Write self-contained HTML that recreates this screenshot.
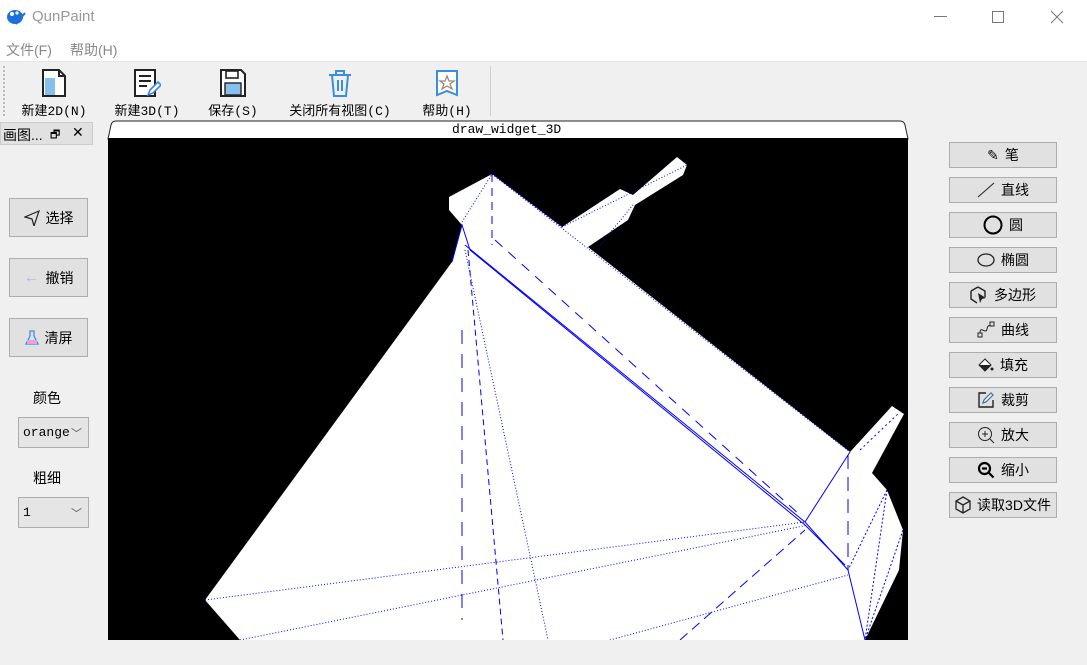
<!DOCTYPE html>
<html><head><meta charset="utf-8"><style>
*{margin:0;padding:0;box-sizing:border-box}
body{width:1087px;height:665px;background:#f0f0f0;font-family:"Liberation Sans","Noto Sans CJK SC",sans-serif;position:relative;overflow:hidden;font-size:13px;color:#000}
.abs{position:absolute}
.btn{position:absolute;background:#e1e1e1;border:1px solid #adadad;display:flex;align-items:center;justify-content:center;gap:6px;font-size:14px}
.tb{position:absolute;top:68px;text-align:center;font-size:13px;font-family:"Liberation Mono","Noto Sans CJK SC",monospace}
.tb svg{display:block;margin:0 auto 2px}
.combo{position:absolute;left:18px;width:71px;height:31px;background:#e5e5e5;border:1px solid #adadad;font-family:"Liberation Mono",monospace;font-size:13px;padding:7px 4px;overflow:hidden;white-space:nowrap}
.combo i{position:absolute;right:6px;top:7px;font-style:normal;color:#555;font-size:11px}
</style></head><body>
<div class="abs" style="left:0;top:0;width:1087px;height:62px;background:#fff"></div>
<svg class="abs" style="left:6px;top:8px" width="20" height="18"><ellipse cx="9" cy="9" rx="8" ry="7" fill="#1e6fd9"/><circle cx="6" cy="6" r="2" fill="#fff"/><circle cx="11" cy="5" r="1.6" fill="#fff"/><line x1="10" y1="16" x2="19" y2="5" stroke="#1e6fd9" stroke-width="2"/></svg>
<div class="abs" style="left:32px;top:8px;font-size:15px;color:#999">QunPaint</div>
<div class="abs" style="left:934px;top:16px;width:13px;height:1px;background:#777"></div>
<div class="abs" style="left:992px;top:11px;width:12px;height:12px;border:1px solid #777"></div>
<svg class="abs" style="left:1050px;top:10px" width="14" height="14"><path d="M1 1L13 13M13 1L1 13" stroke="#777"/></svg>
<div class="abs" style="left:6px;top:40px;font-size:14px;color:#888">文件(F)</div>
<div class="abs" style="left:70px;top:40px;font-size:14px;color:#888">帮助(H)</div>
<div class="abs" style="left:0;top:61px;width:1087px;height:1px;background:#e6e6e6"></div>
<div class="abs" style="left:3px;top:66px;width:2px;height:50px;border-left:2px dotted #bbb"></div>
<div class="abs" style="left:490px;top:66px;width:1px;height:50px;background:#d0d0d0"></div>
<div class="tb" style="left:18px;width:72px"><svg width="26" height="30"><path d="M2 2h16l6 6v20H2z" fill="#fff" stroke="#222" stroke-width="2"/><rect x="4" y="10" width="10" height="17" fill="#85c1ec"/><path d="M18 2v6h6" fill="none" stroke="#222" stroke-width="2"/></svg>新建2D(N)</div>
<div class="tb" style="left:111px;width:72px"><svg width="28" height="30"><path d="M2 2h20v26H2z" fill="#fff" stroke="#222" stroke-width="2"/><path d="M6 8h12M6 13h12M6 18h8" stroke="#222" stroke-width="2"/><path d="M15 27l2-5 8-8 3 3-8 8z" fill="#fff" stroke="#3a86e0" stroke-width="1.6"/></svg>新建3D(T)</div>
<div class="tb" style="left:204px;width:58px"><svg width="28" height="30"><path d="M2 2h20l4 4v22H2z" fill="#fff" stroke="#222" stroke-width="2"/><rect x="7" y="3" width="12" height="7" fill="#fff" stroke="#222" stroke-width="1.6"/><rect x="6" y="15" width="16" height="12" fill="#85c1ec" stroke="#222" stroke-width="1.4"/></svg>保存(S)</div>
<div class="tb" style="left:283px;width:114px"><svg width="26" height="30"><path d="M2 7h22M9 7V3h8v4M5 7l2 21h12l2-21" fill="none" stroke="#3a8ee0" stroke-width="2"/><path d="M11 12v11M15 12v11" stroke="#3a8ee0" stroke-width="2"/></svg>关闭所有视图(C)</div>
<div class="tb" style="left:418px;width:58px"><svg width="26" height="30"><path d="M3 3h20v24l-10-4-10 4z" fill="#fff" stroke="#3a8ee0" stroke-width="2"/><path d="M13 8l2 5h5l-4 3 2 5-5-3-5 3 2-5-4-3h5z" fill="#fff" stroke="#a08878" stroke-width="1.3"/></svg>帮助(H)</div>
<div class="abs" style="left:0;top:122px;width:93px;height:23px;background:#e1e1e1;border:1px solid #ccc"></div>
<div class="abs" style="left:3px;top:125px;font-size:14px">画图...</div>
<div class="abs" style="left:50px;top:126px;font-size:11px">🗗</div>
<div class="abs" style="left:72px;top:124px;font-size:14px">✕</div>
<div class="btn" style="left:9px;top:198px;width:79px;height:39px"><svg width="16" height="16"><path d="M15 1L1 7l7 2 2 7z" fill="none" stroke="#222" stroke-width="1.2"/></svg>选择</div>
<div class="btn" style="left:9px;top:258px;width:79px;height:39px"><span style="color:#c8a8f0;font-size:16px">←</span>撤销</div>
<div class="btn" style="left:9px;top:318px;width:79px;height:39px"><svg width="14" height="16"><path d="M5 1v5L1 14h12L9 6V1z" fill="none" stroke="#3a8ee0" stroke-width="1.3"/><rect x="2" y="10" width="10" height="4" fill="#e8a0e0"/></svg>清屏</div>
<div class="abs" style="left:33px;top:388px;font-size:14px">颜色</div>
<div class="combo" style="top:417px">orange<i>﹀</i></div>
<div class="abs" style="left:33px;top:468px;font-size:14px">粗细</div>
<div class="combo" style="top:497px">1<i>﹀</i></div>
<svg class="abs" style="left:107px;top:120px" width="802" height="20"><path d="M1 19L4 5Q5 1 9 1H793Q797 1 798 5L801 19Z" fill="#fff" stroke="#222"/></svg>
<div class="abs" style="left:452px;top:122px;font-family:'Liberation Mono',monospace;font-size:13px">draw_widget_3D</div>
<svg class="abs" style="left:108px;top:138px" width="800" height="502" viewBox="108 138 800 502">
<rect x="108" y="138" width="800" height="502" fill="#000"/>
<polygon fill="#fff" points="205,600 452,262 462,225 449,210 449,197 492,174 562,227 620,189 633,195 677,157 687,165 683,175 635,205 628,220 588,247 850,452 892,406 904,414 872,473 887,490 903,530 899,570 865,640 240,640"/>
<g fill="none" stroke="#0000ff" stroke-width="1">
<path d="M465,245L805,522L848,570L865,640"/>
<path d="M470,250L805,525L845,565" />
<path d="M850,452L805,522"/>
<path d="M462,222L492,174L562,227" stroke-dasharray="1 2"/>
<path d="M492,174L850,452" stroke-dasharray="1 2"/>
<path d="M492,174V245" stroke-dasharray="8 6"/>
<path d="M495,240L800,515" stroke-dasharray="10 8"/>
<path d="M462,330V620" stroke-dasharray="14 10"/>
<path d="M468,250L503,640" stroke-dasharray="6 4"/>
<path d="M465,250L548,640" stroke-dasharray="1 2"/>
<path d="M205,600L805,522" stroke-dasharray="1 2"/>
<path d="M240,640L808,525M610,640L848,575" stroke-dasharray="1 2"/>
<path d="M680,640L805,530" stroke-dasharray="10 6"/>
<path d="M848,455V570" stroke-dasharray="14 8"/>
<path d="M887,490L865,640M903,530L865,640M887,490L848,570" stroke-dasharray="2 2"/>
<path d="M562,227L687,165M600,245L633,205" stroke-dasharray="1 2"/>
<path d="M860,450L900,412" stroke-dasharray="2 3"/>
<path d="M452,262L462,225L470,250"/>
</g>
</svg>
<div class="btn" style="left:949px;top:142px;width:108px;height:26px"><span>✎</span>笔</div>
<div class="btn" style="left:949px;top:177px;width:108px;height:26px"><svg width="18" height="16"><path d="M1 15L17 1" stroke="#222"/></svg>直线</div>
<div class="btn" style="left:949px;top:212px;width:108px;height:26px"><svg width="20" height="20"><circle cx="10" cy="10" r="8.5" fill="none" stroke="#000" stroke-width="2"/></svg>圆</div>
<div class="btn" style="left:949px;top:247px;width:108px;height:26px"><svg width="18" height="14"><ellipse cx="9" cy="7" rx="8" ry="6" fill="none" stroke="#222" stroke-width="1.3"/></svg>椭圆</div>
<div class="btn" style="left:949px;top:282px;width:108px;height:26px"><svg width="18" height="18"><path d="M8 1l7 4v6M1 5l7-4M1 5v8l6 4" fill="none" stroke="#222" stroke-width="1.4"/><path d="M8 7l8 5-4 1-2 4z" fill="#222"/></svg>多边形</div>
<div class="btn" style="left:949px;top:317px;width:108px;height:26px"><svg width="18" height="18"><rect x="1" y="12" width="4" height="4" fill="none" stroke="#222"/><rect x="13" y="1" width="4" height="4" fill="none" stroke="#222"/><path d="M3 12C3 4 9 14 10 8S14 6 15 5" fill="none" stroke="#222"/></svg>曲线</div>
<div class="btn" style="left:949px;top:352px;width:108px;height:26px"><svg width="16" height="14"><path d="M7 1l6 6-6 6-6-6z" fill="#fff" stroke="#222"/><path d="M1 7h12l-6 6z" fill="#222"/><circle cx="14" cy="11" r="1.5" fill="#222"/></svg>填充</div>
<div class="btn" style="left:949px;top:387px;width:108px;height:26px"><svg width="18" height="18"><path d="M9 2H2v14h14V9" fill="none" stroke="#222" stroke-width="1.4"/><path d="M6 12l1-3 7-7 2 2-7 7z" fill="#fff" stroke="#3a6ea0" stroke-width="1.2"/></svg>裁剪</div>
<div class="btn" style="left:949px;top:422px;width:108px;height:26px"><svg width="18" height="18"><circle cx="8" cy="8" r="6.5" fill="none" stroke="#222"/><path d="M8 5v6M5 8h6M13 13l4 4" stroke="#222"/></svg>放大</div>
<div class="btn" style="left:949px;top:457px;width:108px;height:26px"><svg width="18" height="18"><circle cx="7.5" cy="7.5" r="5.5" fill="none" stroke="#000" stroke-width="2.2"/><path d="M5 7.5h5M11.5 11.5l5 5" stroke="#000" stroke-width="2.2"/></svg>缩小</div>
<div class="btn" style="left:949px;top:492px;width:108px;height:26px"><svg width="16" height="18"><path d="M8 1l7 4v8l-7 4-7-4V5zM1 5l7 4 7-4M8 9v8" fill="none" stroke="#222" stroke-width="1.3"/></svg>读取3D文件</div>
</body></html>
